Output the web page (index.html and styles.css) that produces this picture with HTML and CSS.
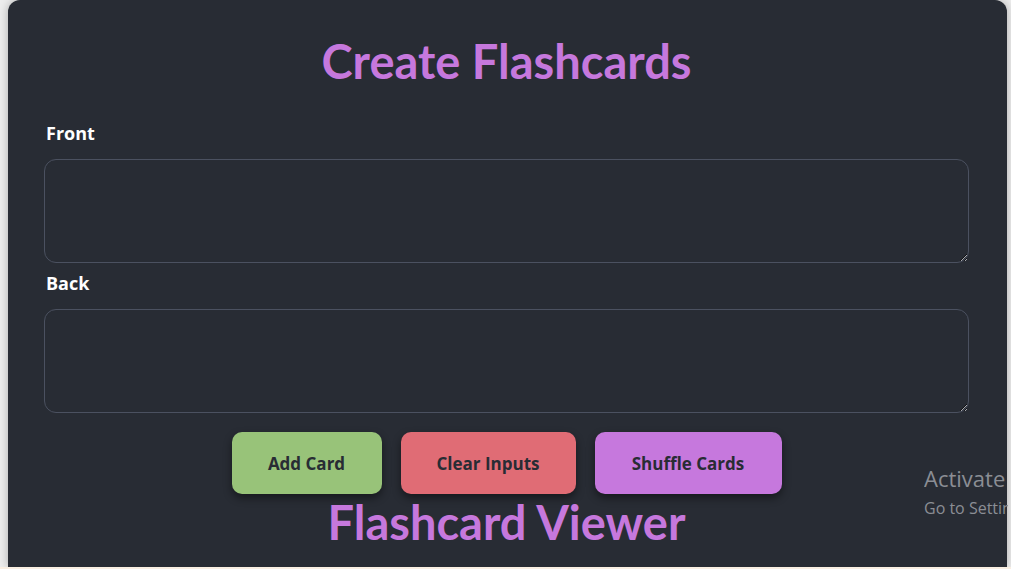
FILE: index.html
```html
<!DOCTYPE html>
<html lang="en">
<head>
<meta charset="utf-8">
<title>Flashcards</title>
<link rel="stylesheet" href="styles.css">
</head>
<body>
<div class="frame">
  <main class="panel">
    <h1 class="title">Create Flashcards</h1>
    <div class="field">
      <label class="label" for="front">Front</label>
      <textarea id="front" class="input"></textarea>
    </div>
    <div class="field">
      <label class="label" for="back">Back</label>
      <textarea id="back" class="input"></textarea>
    </div>
    <div class="actions">
      <button class="btn btn-add">Add Card</button>
      <button class="btn btn-clear">Clear Inputs</button>
      <button class="btn btn-shuffle">Shuffle Cards</button>
    </div>
    <h2 class="title title-viewer">Flashcard Viewer</h2>
  </main>
  <div class="watermark">
    <div class="wm-big">Activate Windows</div>
    <div class="wm-small">Go to Settings to activate Windows.</div>
  </div>
</div>
</body>
</html>
```

FILE: styles.css
```css
html, body {
  margin: 0;
  padding: 0;
}
body {
  background: #f9efe3;
  font-family: "Open Sans", "Noto Sans", sans-serif;
  overflow: hidden;
}
.frame {
  position: relative;
  height: 567px;
  background: #ededed;
  padding-left: 8px;
  padding-right: 4px;
  overflow: hidden;
}
.panel {
  box-sizing: border-box;
  height: 567px;
  background: #282c34;
  border-radius: 12px 12px 0 0;
  box-shadow: 0 0 10px rgba(0, 0, 0, 0.28);
  padding: 30px 38px 0 36px;
  display: flex;
  flex-direction: column;
}
.title {
  margin: 0;
  text-align: center;
  color: #c678dd;
  font-family: "Lato", "Noto Sans", sans-serif;
  font-weight: 700;
  font-size: 47px;
  line-height: 62px;
  letter-spacing: 0;
}
.field {
  display: flex;
  flex-direction: column;
}
.field:first-of-type {
  margin-top: 29px;
}
.label {
  color: #ffffff;
  font-weight: 700;
  font-size: 18px;
  line-height: 24px;
  margin-bottom: 14px;
  padding-left: 2px;
}
.field + .field .label {
  margin-top: 8px;
}
.input {
  box-sizing: border-box;
  width: 100%;
  height: 104px;
  background: #282c34;
  border: 1px solid #4b5160;
  border-radius: 12px;
  color: #fff;
  resize: vertical;
  font-family: inherit;
}
.actions {
  display: flex;
  justify-content: center;
  gap: 19px;
  margin-top: 19px;
}
.btn {
  height: 62px;
  border: none;
  border-radius: 10px;
  color: #282c34;
  font-family: "Open Sans", "Noto Sans", sans-serif;
  font-weight: 700;
  font-size: 17px;
  box-shadow: 0 4px 8px rgba(0, 0, 0, 0.45);
}
.btn-add {
  width: 150px;
  background: #98c379;
}
.btn-clear {
  width: 175px;
  background: #e06c75;
}
.btn-shuffle {
  width: 187px;
  background: #c678dd;
}
.title-viewer {
  margin-top: 0;
  font-size: 47px;
  line-height: 56px;
}
.watermark {
  position: absolute;
  left: 924px;
  top: 462px;
  width: 84px;
  overflow: hidden;
  white-space: nowrap;
  color: #8b8e94;
  font-family: "Open Sans", "Noto Sans", sans-serif;
}
.wm-big {
  font-size: 22px;
  line-height: 32px;
}
.wm-small {
  font-size: 16px;
  line-height: 28px;
}
```
